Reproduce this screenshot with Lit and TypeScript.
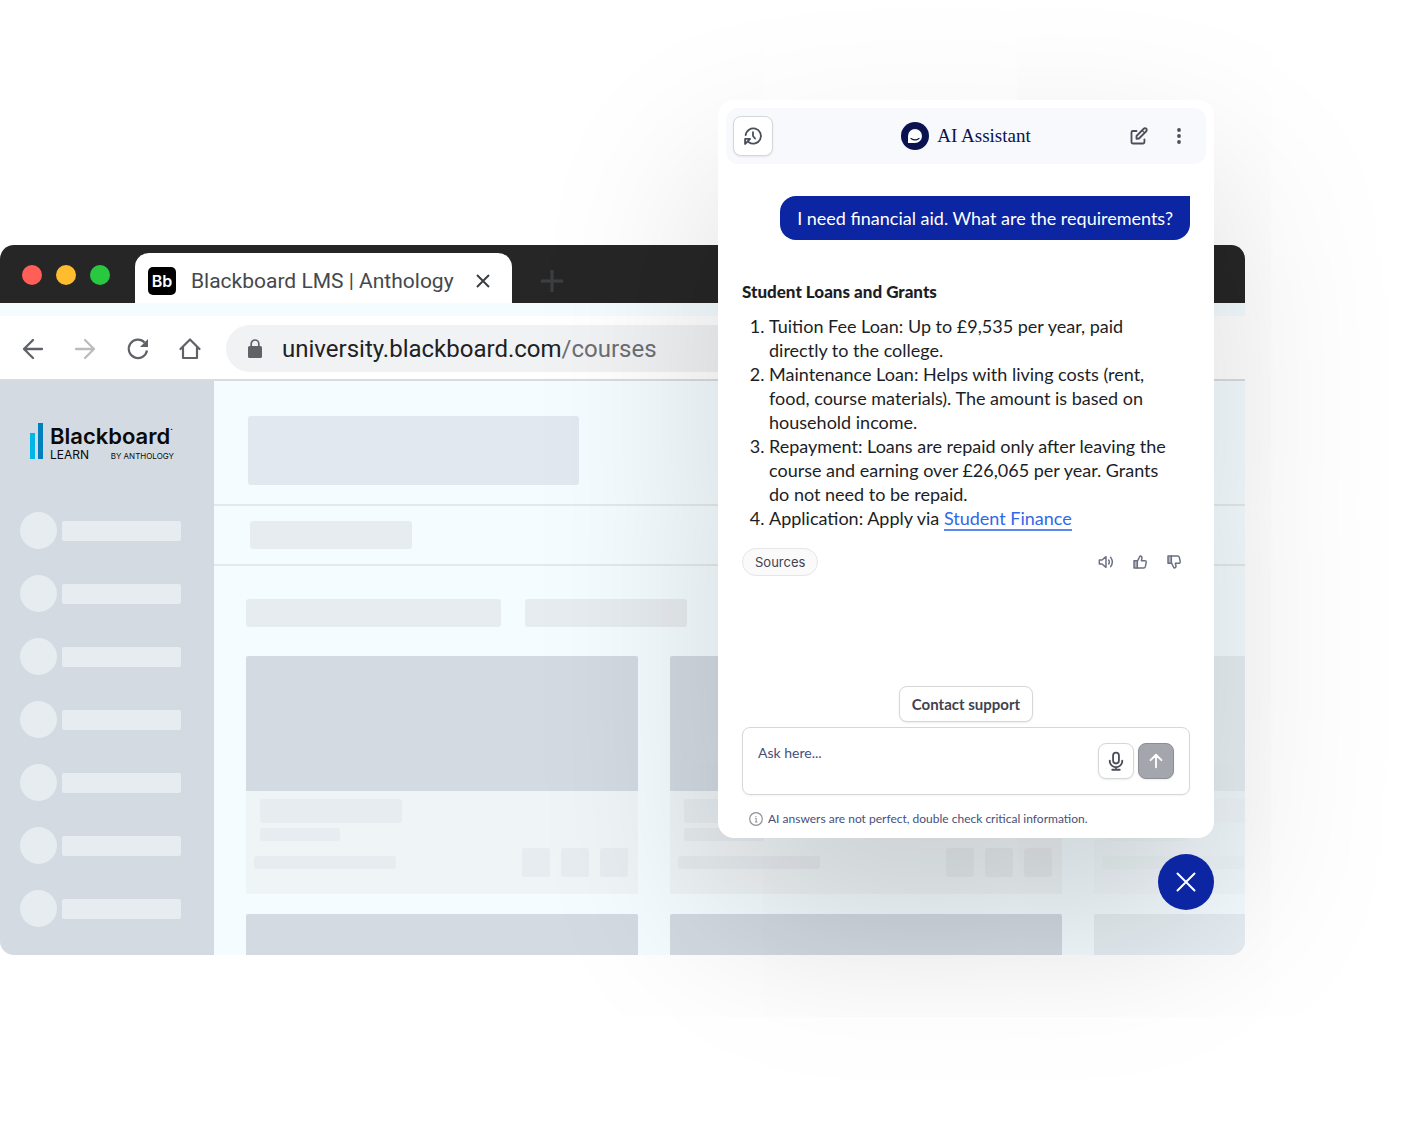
import { LitElement, html, css, svg } from "lit";
import { customElement } from "lit/decorators.js";

@customElement("brand-logo")
class BrandLogo extends LitElement {
  static styles = css`
    :host { display: block; }
    .logo { display: flex; gap: 6px; color: #0a0a0a; font-family: Inter, "Liberation Sans", sans-serif; white-space: nowrap; }
    .bars { flex: none; }
    .words { display: grid; grid-template-rows: 26px 12px; width: 124px; }
    .name { font-weight: 600; font-size: 22px; line-height: 26px; }
    .name sup { font-size: 8px; line-height: 0; vertical-align: 12px; }
    .sub { display: flex; justify-content: space-between; align-items: baseline; font-size: 12px; line-height: 12px; }
    .by { font-size: 8px; }
  `;
  render() {
    return html`<div class="logo">
      <svg class="bars" width="14" height="38" viewBox="0 0 14 38" aria-hidden="true">
        <rect y="10" width="5" height="26" fill="#00b5e8"/><rect x="8" width="5" height="36" fill="#0081bd"/>
      </svg>
      <div class="words">
        <div class="name">Blackboard<sup>·</sup></div>
        <div class="sub"><span>LEARN</span><span class="by">BY ANTHOLOGY</span></div>
      </div>
    </div>`;
  }
}

@customElement("course-card")
class CourseCard extends LitElement {
  static styles = css`
    :host { display: block; }
    .cover { height: 135px; background: #d3dae2; border-radius: 2px 2px 0 0; }
    .body { height: 103px; box-sizing: border-box; padding: 8px 10px 0 8px; background: #eff4f7; }
    .line { height: 13px; border-radius: 3px; background: #e7ecf0; margin-left: 6px; }
    .title { height: 24px; width: 142px; margin-bottom: 5px; }
    .short { width: 80px; }
    .foot { display: flex; align-items: center; gap: 11px; margin-top: 7px; }
    .foot .line { width: 142px; margin: 0 auto 0 0; }
    .square { width: 28px; height: 29px; border-radius: 3px; background: #e7ecf0; }
  `;
  render() {
    return html`<div class="cover"></div>
      <div class="body">
        <div class="line title"></div>
        <div class="line short"></div>
        <div class="foot"><div class="line"></div><div class="square"></div><div class="square"></div><div class="square"></div></div>
      </div>`;
  }
}

@customElement("browser-window")
class BrowserWindow extends LitElement {
  static styles = css`
    :host { display: block; font-family: Roboto, sans-serif; }
    button { border: 0; padding: 0; background: none; display: grid; place-items: center; cursor: pointer; }
    .window { border-radius: 14px; overflow: hidden; background: #f4fcff; }
    .titlebar { display: flex; align-items: flex-end; height: 58px; background: #262626; }
    .lights { display: flex; gap: 14px; align-self: center; padding: 2px 25px 0 22px; }
    .light { width: 20px; height: 20px; border-radius: 50%; }
    .red { background: #ff5f57; } .amber { background: #febc2e; } .green { background: #28c840; }
    .tab { display: flex; align-items: center; width: 377px; height: 50px; box-sizing: border-box; padding: 6px 19px 0 13px; background: #fff; border-radius: 14px 14px 0 0; color: #45484c; font-size: 21px; white-space: nowrap; }
    .favicon { width: 28px; height: 28px; border-radius: 5px; background: #000; color: #fff; font: 600 16px/28px Inter, sans-serif; text-align: center; margin-right: 15px; }
    .tab button { margin-left: auto; }
    .plus { align-self: center; margin: 14px 0 0 28px; }
    .toolbar { display: flex; align-items: center; margin-top: 13px; height: 65px; box-sizing: border-box; padding: 2px 22px 0; background: #fff; border-bottom: 2px solid #d9dcdf; }
    .navs { display: flex; gap: 29px; }
    .address { flex: 1; display: flex; align-items: center; gap: 18px; height: 47px; margin: 0 20px 0 25px; padding-left: 20px; border-radius: 24px; background: #f1f2f4; font-size: 24px; color: #202124; white-space: nowrap; }
    .path { color: #6b6e72; }
    .page { display: flex; height: 574px; overflow: hidden; }
    .side { flex: none; width: 214px; background: #d3dae2; box-sizing: border-box; padding: 42px 20px 0; }
    .side brand-logo { margin-left: 10px; }
    .items { display: grid; gap: 26px; margin-top: 51px; }
    .item { display: flex; align-items: center; gap: 5px; }
    .dot { width: 37px; height: 37px; border-radius: 50%; background: #e7ecf0; }
    .label { width: 119px; height: 20px; border-radius: 2px; background: #e7ecf0; }
    .content { flex: 1; min-width: 0; }
    .block { border-radius: 3px; background: #e7ecf0; height: 28px; }
    .hero { padding: 35px 34px 19px; border-bottom: 2px solid #e5e9ec; }
    .hero .block { height: 69px; width: 331px; background: #e1e8ef; }
    .crumbs { padding: 15px 36px 15px; border-bottom: 2px solid #e5e9ec; }
    .crumbs .block { width: 162px; }
    .filters { display: flex; gap: 24px; padding: 33px 32px 29px; }
    .filters .wide { width: 255px; }
    .filters .narrow { width: 162px; }
    .cards { display: grid; grid-template-columns: repeat(3, 392px); gap: 20px 32px; padding-left: 32px; }
    .faded { opacity: .4; }
  `;
  render() {
    return html`<div class="window">
      <div class="titlebar">
        <div class="lights"><span class="light red"></span><span class="light amber"></span><span class="light green"></span></div>
        <div class="tab"><span class="favicon">Bb</span><span>Blackboard LMS | Anthology</span>
          <button aria-label="Close tab"><svg width="20" height="20" viewBox="0 0 20 20" stroke="#3c4043" stroke-width="2"><path d="M4 4l12 12M16 4L4 16"/></svg></button>
        </div>
        <button class="plus" aria-label="New tab"><svg width="24" height="24" viewBox="0 0 24 24" stroke="#3c4043" stroke-width="3"><path d="M12 1v22M1 12h22"/></svg></button>
      </div>
      <div class="toolbar">
        <div class="navs">
          <button aria-label="Back"><svg width="22" height="24" viewBox="0 0 22 24" fill="none" stroke="#5f6368" stroke-width="2.3" stroke-linecap="round" stroke-linejoin="round"><path d="M20 12H2M11 3l-9 9 9 9"/></svg></button>
          <button aria-label="Forward"><svg width="24" height="24" viewBox="0 0 24 24" fill="none" stroke="#babcbe" stroke-width="2.3" stroke-linecap="round" stroke-linejoin="round"><path d="M3 12h18M12 3l9 9-9 9"/></svg></button>
          <button aria-label="Reload"><svg width="24" height="24" viewBox="0 0 24 24" fill="none" stroke="#5f6368" stroke-width="2.2"><path d="M21 13.500A9.200 9.200 0 1 1 18.600 5.500"/><path d="M22 2v8h-8z" fill="#5f6368" stroke="none"/></svg></button>
          <button aria-label="Home"><svg width="22" height="24" viewBox="0 0 22 24" fill="none" stroke="#5f6368" stroke-width="2.200" stroke-linejoin="round" stroke-linecap="round"><path d="M1.500 12L11 2.500l9.500 9.500M4 10.500V21h14V10.500"/></svg></button>
        </div>
        <div class="address">
          <svg width="18" height="20" viewBox="0 0 18 20" aria-hidden="true"><rect x="2" y="7" width="14" height="12" rx="1.500" fill="#5f6368"/><path d="M5.200 8V4.800a3.800 3.800 0 0 1 7.600 0V8" fill="none" stroke="#5f6368" stroke-width="1.700"/></svg>
          <span>university.blackboard.com<span class="path">/courses</span></span>
        </div>
      </div>
      <div class="page">
        <nav class="side">
          <brand-logo></brand-logo>
          <div class="items">${Array.from({ length: 7 }, () => html`<div class="item"><span class="dot"></span><span class="label"></span></div>`)}</div>
        </nav>
        <div class="content">
          <div class="hero"><div class="block"></div></div>
          <div class="crumbs"><div class="block"></div></div>
          <div class="filters"><div class="block wide"></div><div class="block narrow"></div></div>
          <div class="cards">${[0, 1, 2, 3, 4, 5].map((i) => html`<course-card class=${i % 3 === 2 ? "faded" : ""}></course-card>`)}</div>
        </div>
      </div>
    </div>`;
  }
}

const stroke = (size: number, body: unknown, color = "#4a4f5a") => html`<svg width=${size} height=${size} viewBox="0 0 24 24" fill="none" stroke=${color} stroke-width="2.200" stroke-linecap="round" stroke-linejoin="round" aria-hidden="true">${body}</svg>`;

@customElement("chat-panel")
class ChatPanel extends LitElement {
  static styles = css`
    :host { display: block; font-family: Lato, sans-serif; color: #1c1e26; }
    button { border: 0; padding: 0; background: none; display: grid; place-items: center; cursor: pointer; font: inherit; color: inherit; box-sizing: border-box; }
    .panel { background: #fff; border-radius: 16px; padding: 8px 8px 11px; box-shadow: 0 80px 180px rgba(0, 0, 0, .17); }
    .header { display: flex; align-items: center; justify-content: space-between; height: 56px; box-sizing: border-box; padding: 8px 7px; border-radius: 12px; background: #f8f9fd; }
    .side { display: flex; flex: 1; }
    .end { justify-content: flex-end; }
    .icon { width: 40px; height: 40px; }
    .boxed { border: 1px solid #d6d7da; border-radius: 8px; background: #fff; box-shadow: 0 1px 2px rgba(0, 0, 0, .08); }
    .title { display: flex; align-items: center; gap: 8px; margin: 0; color: #0a1350; font: 400 19px/28px "Liberation Serif", serif; white-space: nowrap; }
    .body { padding: 32px 16px 0; }
    .bubble { width: fit-content; margin: 0 0 0 auto; padding: 0 17px; background: #0b25a3; color: #fff; border-radius: 16px 0 16px 16px; font-size: 18px; line-height: 44px; white-space: nowrap; }
    h2 { margin: 39px 0 10px; font-size: 17px; line-height: 25px; font-weight: 900; }
    ol { margin: 0; padding-left: 27px; font-size: 18px; line-height: 24px; white-space: nowrap; }
    a { color: #2f68e8; text-decoration: none; border-bottom: 2px solid #5b88ee; }
    .actions { display: flex; align-items: center; margin-top: 18px; padding-right: 8px; }
    .sources { height: 28px; padding: 0 12px; margin-right: auto; border: 1px solid #e6e6e8; border-radius: 14px; background: #fafafa; color: #3f434e; font: 400 13px Inter, sans-serif; }
    .actions .small { margin-left: 18px; }
    .support { height: 36px; margin: 110px auto 5px; padding: 0 12px; font-weight: 700; font-size: 15px; color: #3f434e; }
    .composer { display: flex; gap: 4px; height: 68px; box-sizing: border-box; padding: 15px; border: 1px solid #d6d7da; border-radius: 8px; box-shadow: 0 1px 2px rgba(0, 0, 0, .05); }
    .field { flex: 1; min-width: 0; height: 20px; border: 0; padding: 0; outline: none; background: none; font: 400 14px/20px Lato, sans-serif; color: #475079; }
    .field::placeholder { color: #475079; opacity: 1; }
    .composer button { width: 36px; height: 36px; }
    .composer .send { background: #a4a6ae; border-color: #8b8d97; }
    .note { display: flex; align-items: center; gap: 5px; margin: 15px 0 0 7px; font-size: 12px; line-height: 17px; color: #475079; }
    .close { width: 56px; height: 56px; margin: 16px 0 0 auto; border-radius: 50%; background: #0b25a3; position: relative; }
  `;
  render() {
    return html`<section class="panel" aria-label="AI Assistant">
      <header class="header">
        <div class="side"><button class="icon boxed" aria-label="History">${stroke(20, svg`<path d="M3.200 11A9.200 9.200 0 1 1 7 19.500M2.500 15.500v6M2.500 15.500h6M3 21l5-5M12 7.500V12l2.500 3"/>`)}</button></div>
        <h1 class="title">
          <svg width="28" height="28" viewBox="0 0 28 28" aria-hidden="true"><circle cx="14" cy="14" r="14" fill="#0a1350"/><path d="M7 20.500V14a7 7 0 1 1 7 7H7.500a.500.500 0 0 1-.500-.500z" fill="#fff"/><path d="M10 16.500q4 2.800 8 0" fill="none" stroke="#0a1350" stroke-width="1.200" stroke-linecap="round"/></svg>
          AI Assistant
        </h1>
        <div class="side end">
          <button class="icon" aria-label="New chat">${stroke(20, svg`<path d="M9 6H4.500A1.500 1.500 0 0 0 3 7.500v12A1.500 1.500 0 0 0 4.500 21h12.500a1.500 1.500 0 0 0 1.500-1.500V16M9 15.500v-3.500l8.700-8.700a2 2 0 0 1 3 3L12 15z"/><path d="M16 5.500l2.500 2.500" stroke-width="1.500"/>`)}</button>
          <button class="icon" aria-label="More options"><svg width="6" height="18" viewBox="0 0 6 18" fill="#4a4f5a"><circle cx="3" cy="3" r="1.900"/><circle cx="3" cy="9" r="1.900"/><circle cx="3" cy="15" r="1.900"/></svg></button>
        </div>
      </header>
      <div class="body">
        <div class="bubble">I need financial aid. What are the requirements?</div>
        <h2>Student Loans and Grants</h2>
        <ol>
          <li>Tuition Fee Loan: Up to £9,535 per year, paid<br>directly to the college.</li>
          <li>Maintenance Loan: Helps with living costs (rent,<br>food, course materials). The amount is based on<br>household income.</li>
          <li>Repayment: Loans are repaid only after leaving the<br>course and earning over £26,065 per year. Grants<br>do not need to be repaid.</li>
          <li>Application: Apply via <a href="#student-finance">Student Finance</a></li>
        </ol>
        <div class="actions">
          <button class="sources">Sources</button>
          <button class="small" aria-label="Read aloud">${stroke(16, svg`<path d="M2 9v6h4l6 5V4L6 9zM16 9q2 3 0 6M19 5q5 7 0 14"/>`, "#6b7080")}</button>
          <button class="small" aria-label="Good answer">${stroke(16, svg`<path d="M8 11l4-8q3 0 3 3l-1 4h5q2.500 0 2.300 2.500L20 19q-.500 2-2.500 2H8"/><path d="M3 10h5v11H3z" fill="#b5b7bf"/>`, "#6b7080")}</button>
          <button class="small" aria-label="Bad answer">${stroke(16, svg`<path d="M8 13l4 8q3 0 3-3l-1-4h5q2.500 0 2.300-2.500L20 5q-.500-2-2.500-2H8"/><path d="M3 3h5v11H3z" fill="#b5b7bf"/>`, "#6b7080")}</button>
        </div>
        <button class="support boxed">Contact support</button>
        <div class="composer">
          <input class="field" type="text" placeholder="Ask here..." aria-label="Ask here">
          <button class="boxed" aria-label="Dictate">${stroke(20, svg`<rect x="8.500" y="2" width="7" height="13" rx="3.500"/><path d="M4.500 11.500v.500a7.500 7.500 0 0 0 15 0v-.500M12 19.500v2.500M7.500 22.500h9"/>`)}</button>
          <button class="boxed send" aria-label="Send">${stroke(20, svg`<path d="M12 19.500V4.500M5.500 11L12 4.500l6.500 6.500"/>`, "#fff")}</button>
        </div>
        <div class="note">
          <svg width="14" height="14" viewBox="0 0 14 14" fill="none" stroke="#8e919c" aria-hidden="true"><circle cx="7" cy="7" r="6.300" stroke-width="1.200"/><path d="M6 6.300h1.200V10M6 10h2.400M7 4v1"/></svg>
          <span>AI answers are not perfect, double check critical information.</span>
        </div>
      </div>
    </section>
    <button class="close" aria-label="Close chat"><svg width="20" height="20" viewBox="0 0 20 20" stroke="#fff" stroke-width="2" stroke-linecap="round"><path d="M1.500 1.500l17 17M18.500 1.500l-17 17"/></svg></button>`;
  }
}

@customElement("app-root")
class AppRoot extends LitElement {
  static styles = css`
    :host { display: block; }
    .stage { position: relative; min-height: 100vh; box-sizing: border-box; padding: 245px 169px 0 0; background: #fff; overflow: hidden; }
    .chat { position: absolute; top: 100px; right: 200px; width: 496px; }
  `;
  render() {
    return html`<main class="stage">
      <browser-window></browser-window>
      <chat-panel class="chat"></chat-panel>
    </main>`;
  }
}
